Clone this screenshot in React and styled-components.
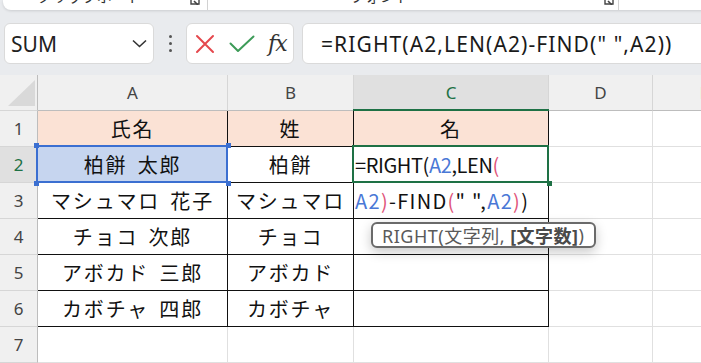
import React from 'react';
import styled, { createGlobalStyle } from 'styled-components';

const Global = createGlobalStyle`
  html, body { margin: 0; padding: 0; }
  body {
    width: 701px; height: 363px; overflow: hidden;
    background: #e9ebee;
    font-family: "Noto Sans", "Noto Sans CJK JP", sans-serif;
  }
`;

const Page = styled.div`
  width: 701px;
  height: 363px;
  overflow: hidden;
  background: #e9ebee;
  display: flex;
  flex-direction: column;
`;

/* ---------- ribbon remnant ---------- */
const Ribbon = styled.div`
  flex: none;
  margin-left: 3px;
  width: 740px;
  height: 10px;
  background: #fff;
  border-radius: 0 0 8px 8px;
  box-shadow: 0 1px 3px rgba(0, 0, 0, 0.13);
  display: flex;
  align-items: flex-end;
  overflow: hidden;
`;

const RibbonLabel = styled.span`
  margin-left: ${p => p.$ml}px;
  margin-bottom: 6px;
  font-family: "Noto Sans CJK JP", sans-serif;
  font-size: 15px;
  line-height: 16px;
  color: #333;
  white-space: nowrap;
`;

const Launcher = styled.svg`
  margin-left: ${p => p.$ml}px;
  margin-bottom: 5px;
  flex: none;
`;

const RibbonSep = styled.div`
  margin-left: ${p => p.$ml}px;
  width: 1px;
  height: 10px;
  background: #d2d2d2;
  align-self: stretch;
`;

/* ---------- formula bar ---------- */
const FormulaRow = styled.div`
  flex: none;
  display: flex;
  height: 41px;
  margin-top: 13px;
  padding-left: 4px;
`;

const Box = styled.div`
  box-sizing: border-box;
  background: #fff;
  border: 1px solid #dadada;
  border-radius: 6px;
  display: flex;
  align-items: center;
`;

const NameBox = styled(Box)`
  width: 150px;
  justify-content: space-between;
  padding: 0 6px 0 6px;
  font-family: "Noto Sans", sans-serif;
  font-size: 21px;
  color: #222;
`;

const DotsCol = styled.div`
  width: 32px;
  display: flex;
  flex-direction: column;
  align-items: center;
  justify-content: center;
  gap: 4px;
`;

const Dot = styled.span`
  width: 3px;
  height: 3px;
  border-radius: 50%;
  background: #555;
`;

const ActionBox = styled(Box)`
  width: 108px;
  padding-left: 8px;
`;

const IconSlot = styled.span`
  display: flex;
  align-items: center;
  margin-left: ${p => p.$ml || 0}px;
`;

const Fx = styled.span`
  margin-left: 13px;
  font-family: "DejaVu Serif", "Liberation Serif", serif;
  font-style: italic;
  font-size: 22px;
  color: #333;
  letter-spacing: -1px;
`;

const FormulaInput = styled(Box)`
  flex: 1;
  margin-left: 8px;
  margin-right: -20px;
  padding-left: 18px;
  font-family: "Noto Sans", sans-serif;
  font-size: 21px;
  letter-spacing: 1.1px;
  color: #1a1a1a;
  white-space: pre;
`;

/* ---------- sheet ---------- */
const Sheet = styled.div`
  flex: none;
  margin-top: 11px;
  position: relative;
  display: grid;
  grid-template-columns: 38px 190px 126px 195px 104px 104px;
  grid-auto-rows: 36px;
  background: #fff;
`;

const HeaderCell = styled.div`
  box-sizing: border-box;
  position: relative;
  background: ${p => (p.$active ? '#e0e0e0' : '#f0f0f0')};
  border-right: 1px solid ${p => (p.$row ? '#bdbdbd' : '#d6d6d6')};
  border-bottom: 1px solid ${p => (p.$row ? '#d6d6d6' : '#bdbdbd')};
  display: flex;
  align-items: center;
  justify-content: center;
  font-family: "Noto Sans", sans-serif;
  font-size: 17px;
  color: ${p => (p.$active ? '#1e7145' : '#444')};
`;

const ActiveBar = styled.span`
  position: absolute;
  background: #1e7145;
  ${p =>
    p.$vertical
      ? 'top: -1px; bottom: -1px; right: -1px; width: 2px;'
      : 'left: -1px; right: -1px; bottom: -1px; height: 2px;'}
`;

const Cell = styled.div`
  box-sizing: border-box;
  position: relative;
  background: ${p => p.$fill || '#fff'};
  border-right: 1px solid ${p => (p.$table ? '#111' : '#e0e0e0')};
  border-bottom: 1px solid ${p => (p.$table ? '#111' : '#e0e0e0')};
  display: flex;
  align-items: center;
  justify-content: ${p => (p.$left ? 'flex-start' : 'center')};
  padding-left: ${p => (p.$left ? '1px' : '0')};
  font-family: "Noto Sans CJK JP", sans-serif;
  font-size: 20px;
  letter-spacing: 1.8px;
  word-spacing: 4px;
  color: #111;
  white-space: nowrap;
`;

const EditLine = styled.span`
  letter-spacing: ${p => p.$ls}px;
  word-spacing: 0;
`;

const Frame = styled.span`
  position: absolute;
  z-index: 2;
  top: -2px;
  left: -2px;
  right: -1px;
  bottom: -1px;
  border: 2px solid ${p => p.$color};
  pointer-events: none;
`;

const Handle = styled.span`
  position: absolute;
  z-index: 3;
  width: 5px;
  height: 5px;
  background: ${p => p.$color};
  ${p => (p.$top ? 'top: -4px;' : 'bottom: -4px;')}
  ${p => (p.$leftSide ? 'left: -4px;' : 'right: -4px;')}
`;

const Ref = styled.span`
  color: ${p => p.$c};
`;

const Tooltip = styled.div`
  position: absolute;
  z-index: 5;
  left: 371px;
  top: 147px;
  height: 26px;
  box-sizing: border-box;
  padding: 0 10px 0 9px;
  display: flex;
  align-items: center;
  background: #fff;
  border: 2px solid #6a6a6a;
  border-radius: 6px;
  box-shadow: 0 4px 12px rgba(0, 0, 0, 0.22);
  font-family: "Noto Sans", "Noto Sans CJK JP", sans-serif;
  font-size: 18px;
  letter-spacing: 0.5px;
  color: #5a5a5a;
  white-space: pre;
`;

const Bold = styled.b`
  font-weight: 700;
  color: #4a4a4a;
`;

const BLUE = '#4a78d6';
const PINK = '#e0557a';

const formula1 = (
  <EditLine $ls={-0.4}>
    =RIGHT(<Ref $c={BLUE}>A2</Ref>,LEN<Ref $c={PINK}>(</Ref>
  </EditLine>
);
const formula2 = (
  <EditLine $ls={1.3}>
    <Ref $c={BLUE}>A2</Ref>
    <Ref $c={PINK}>)</Ref>-FIND<Ref $c={PINK}>(</Ref>" ",<Ref $c={BLUE}>A2</Ref>
    <Ref $c={PINK}>)</Ref>)
  </EditLine>
);

const rows = [
  ['氏名', '姓', '名'],
  ['柏餅 太郎', '柏餅', formula1],
  ['マシュマロ 花子', 'マシュマロ', formula2],
  ['チョコ 次郎', 'チョコ', ''],
  ['アボカド 三郎', 'アボカド', ''],
  ['カボチャ 四郎', 'カボチャ', ''],
  ['', '', ''],
];

const cols = ['A', 'B', 'C', 'D', 'E'];

function Corner() {
  return (
    <HeaderCell $row>
      <svg width="38" height="36" viewBox="0 0 38 36" style={{ position: 'absolute', left: 0, top: 0 }}>
        <polygon points="8,31 35,31 35,5" fill="#d9d9d9" />
      </svg>
    </HeaderCell>
  );
}

export default function App() {
  return (
    <Page>
      <Global />
      <Ribbon>
        <RibbonLabel $ml={34}>クリップボード</RibbonLabel>
        <Launcher $ml={48} width="10" height="10" viewBox="0 0 10 10">
          <path d="M1 1 H9 V9 H1 Z" fill="none" stroke="#444" strokeWidth="1.4" />
          <path d="M4 6 L8 10" stroke="#444" strokeWidth="1.6" />
        </Launcher>
        <RibbonSep $ml={7} />
        <RibbonLabel $ml={142}>フォント</RibbonLabel>
        <Launcher $ml={194} width="10" height="10" viewBox="0 0 10 10">
          <path d="M1 1 H9 V9 H1 Z" fill="none" stroke="#444" strokeWidth="1.4" />
          <path d="M4 6 L8 10" stroke="#444" strokeWidth="1.6" />
        </Launcher>
        <RibbonSep $ml={4} />
      </Ribbon>

      <FormulaRow>
        <NameBox>
          <span>SUM</span>
          <svg width="15" height="9" viewBox="0 0 15 9">
            <path d="M1 1.5 L7.5 7.5 L14 1.5" fill="none" stroke="#333" strokeWidth="1.6" />
          </svg>
        </NameBox>
        <DotsCol>
          <Dot />
          <Dot />
          <Dot />
        </DotsCol>
        <ActionBox>
          <IconSlot>
            <svg width="20" height="20" viewBox="0 0 20 20">
              <path d="M2 2 L18 18 M18 2 L2 18" stroke="#e5484d" strokeWidth="2" strokeLinecap="round" />
            </svg>
          </IconSlot>
          <IconSlot $ml={14}>
            <svg width="26" height="18" viewBox="0 0 26 18">
              <path d="M1.5 8.5 L9 16 L24.5 1.5" fill="none" stroke="#3d9b58" strokeWidth="2" strokeLinecap="round" strokeLinejoin="round" />
            </svg>
          </IconSlot>
          <Fx>fx</Fx>
        </ActionBox>
        <FormulaInput>=RIGHT(A2,LEN(A2)-FIND(" ",A2))</FormulaInput>
      </FormulaRow>

      <Sheet>
        <Corner />
        {cols.map(c => (
          <HeaderCell key={c} $active={c === 'C'}>
            {c}
            {c === 'C' && <ActiveBar />}
          </HeaderCell>
        ))}
        {rows.map((r, i) => {
          const n = i + 1;
          const inTable = n <= 6;
          const fill = n === 1 ? '#fbe2d5' : undefined;
          return (
            <React.Fragment key={n}>
              <HeaderCell $row $active={n === 2}>
                {n}
                {n === 2 && <ActiveBar $vertical />}
              </HeaderCell>
              <Cell $table={inTable} $fill={n === 2 ? '#c6d5ef' : fill}>
                {r[0]}
                {n === 2 && (
                  <>
                    <Frame $color="#3b6fd1" />
                    <Handle $color="#3b6fd1" $top $leftSide />
                    <Handle $color="#3b6fd1" $top />
                    <Handle $color="#3b6fd1" $leftSide />
                    <Handle $color="#3b6fd1" />
                  </>
                )}
              </Cell>
              <Cell $table={inTable} $fill={fill}>{r[1]}</Cell>
              <Cell $table={inTable} $fill={fill} $left={n === 2 || n === 3}>
                {r[2]}
                {n === 2 && (
                  <>
                    <Frame $color="#1e7145" />
                    <Handle $color="#1e7145" />
                  </>
                )}
              </Cell>
              <Cell />
              <Cell />
            </React.Fragment>
          );
        })}
        <Tooltip>
          RIGHT(文字列, <Bold>[文字数]</Bold>)
        </Tooltip>
      </Sheet>
    </Page>
  );
}
